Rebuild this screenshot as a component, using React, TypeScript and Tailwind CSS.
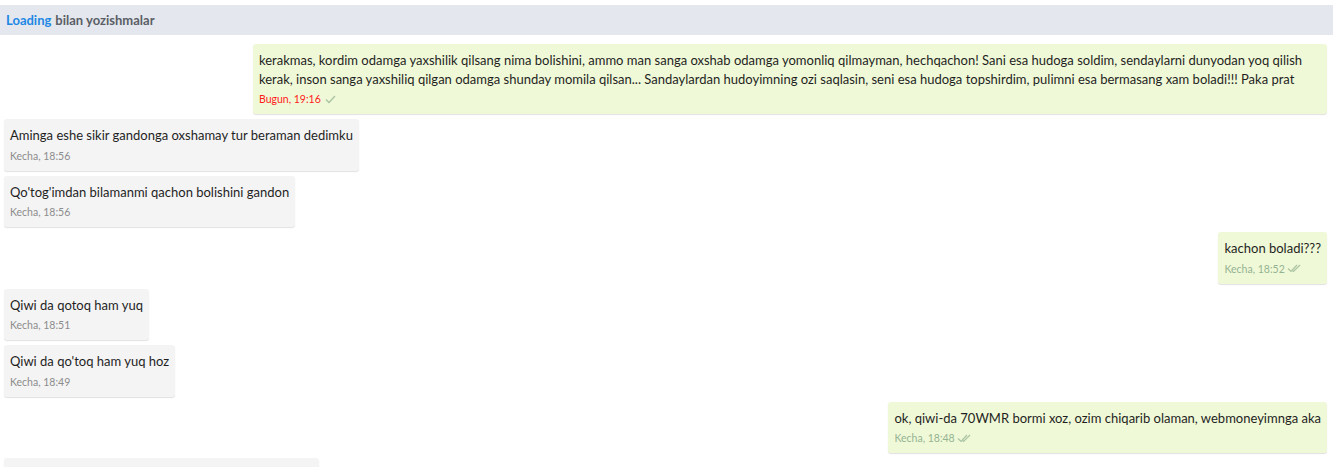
import React from "react";

type Msg = { side: "in" | "out"; text?: React.ReactNode; time?: string; status?: "red" | "double"; width?: string };

function Check() {
  return (
    <svg width="11" height="9" viewBox="0 0 11 9" className="inline-block ml-[4px] align-[-1px]">
      <path d="M1 4.5 L4 7.5 L10 1" fill="none" stroke="#a9c3a3" strokeWidth="1.3" />
    </svg>
  );
}

function DoubleCheck() {
  return (
    <svg width="14" height="9" viewBox="0 0 14 9" className="inline-block ml-[2px] align-[-1px]">
      <path d="M1 4.5 L4 7.5 L10 1" fill="none" stroke="#a9c3a3" strokeWidth="1.2" />
      <path d="M5.5 6.5 L6.5 7.5 L13 1" fill="none" stroke="#a9c3a3" strokeWidth="1.2" />
    </svg>
  );
}

const msgs: Msg[] = [
  {
    side: "out",
    width: "w-[1074px]",
    text: (
      <>
        kerakmas, kordim odamga yaxshilik qilsang nima bolishini, ammo man sanga oxshab odamga yomonliq qilmayman, hechqachon! Sani esa hudoga soldim, sendaylarni dunyodan yoq qilish
        <br />
        kerak, inson sanga yaxshiliq qilgan odamga shunday momila qilsan... Sandaylardan hudoyimning ozi saqlasin, seni esa hudoga topshirdim, pulimni esa bermasang xam boladi!!! Paka prat
      </>
    ),
    time: "Bugun, 19:16",
    status: "red",
  },
  { side: "in", text: "Aminga eshe sikir gandonga oxshamay tur beraman dedimku", time: "Kecha, 18:56" },
  { side: "in", text: "Qo'tog'imdan bilamanmi qachon bolishini gandon", time: "Kecha, 18:56" },
  { side: "out", text: "kachon boladi???", time: "Kecha, 18:52", status: "double" },
  { side: "in", text: "Qiwi da qotoq ham yuq", time: "Kecha, 18:51" },
  { side: "in", text: "Qiwi da qo'toq ham yuq hoz", time: "Kecha, 18:49" },
  { side: "out", text: "ok, qiwi-da 70WMR bormi xoz, ozim chiqarib olaman, webmoneyimnga aka", time: "Kecha, 18:48", status: "double" },
  { side: "in", width: "w-[315px] h-[51.5px]" },
];

export default function App() {
  return (
    <div className="w-[1333px] h-[467px] overflow-hidden bg-white pt-[5px]" style={{ fontFamily: "Lato, 'Open Sans', sans-serif" }}>
      <div className="h-[30px] bg-[#e4e7ed] pl-[6px] flex items-center text-[13px] font-bold leading-[30px]">
        <span className="text-[#1e88e5]">Loading</span>
        <span className="text-[#5a5e66] ml-[4px]">bilan yozishmalar</span>
      </div>
      <div className="flex flex-col gap-[5px] pt-[9px] pl-[4px] pr-[6px]">
        {msgs.map((m, i) => (
          <div key={i} className={m.side === "out" ? "flex justify-end" : "flex justify-start"}>
            <div
              className={
                (m.side === "out" ? "bg-[#f0f9d7] " : "bg-[#f4f4f4] ") +
                (m.width ?? "") +
                " rounded-[3px] px-[6px] pt-[7px] pb-[8px] shadow-[0_1px_1px_rgba(0,0,0,0.12)]"
              }
            >
              {m.text && <div className="text-[13px] leading-[18.5px] text-[#1f1f1f]">{m.text}</div>}
              {m.time && (
                <div
                  className={
                    "mt-[4px] text-[10.5px] leading-[14px] flex items-center " +
                    (m.status === "red" ? "text-[#ff1a1a]" : m.side === "out" ? "text-[#94b393]" : "text-[#8c8c8c]")
                  }
                >
                  <span>{m.time}</span>
                  {m.status === "red" && <Check />}
                  {m.status === "double" && <DoubleCheck />}
                </div>
              )}
            </div>
          </div>
        ))}
      </div>
    </div>
  );
}
